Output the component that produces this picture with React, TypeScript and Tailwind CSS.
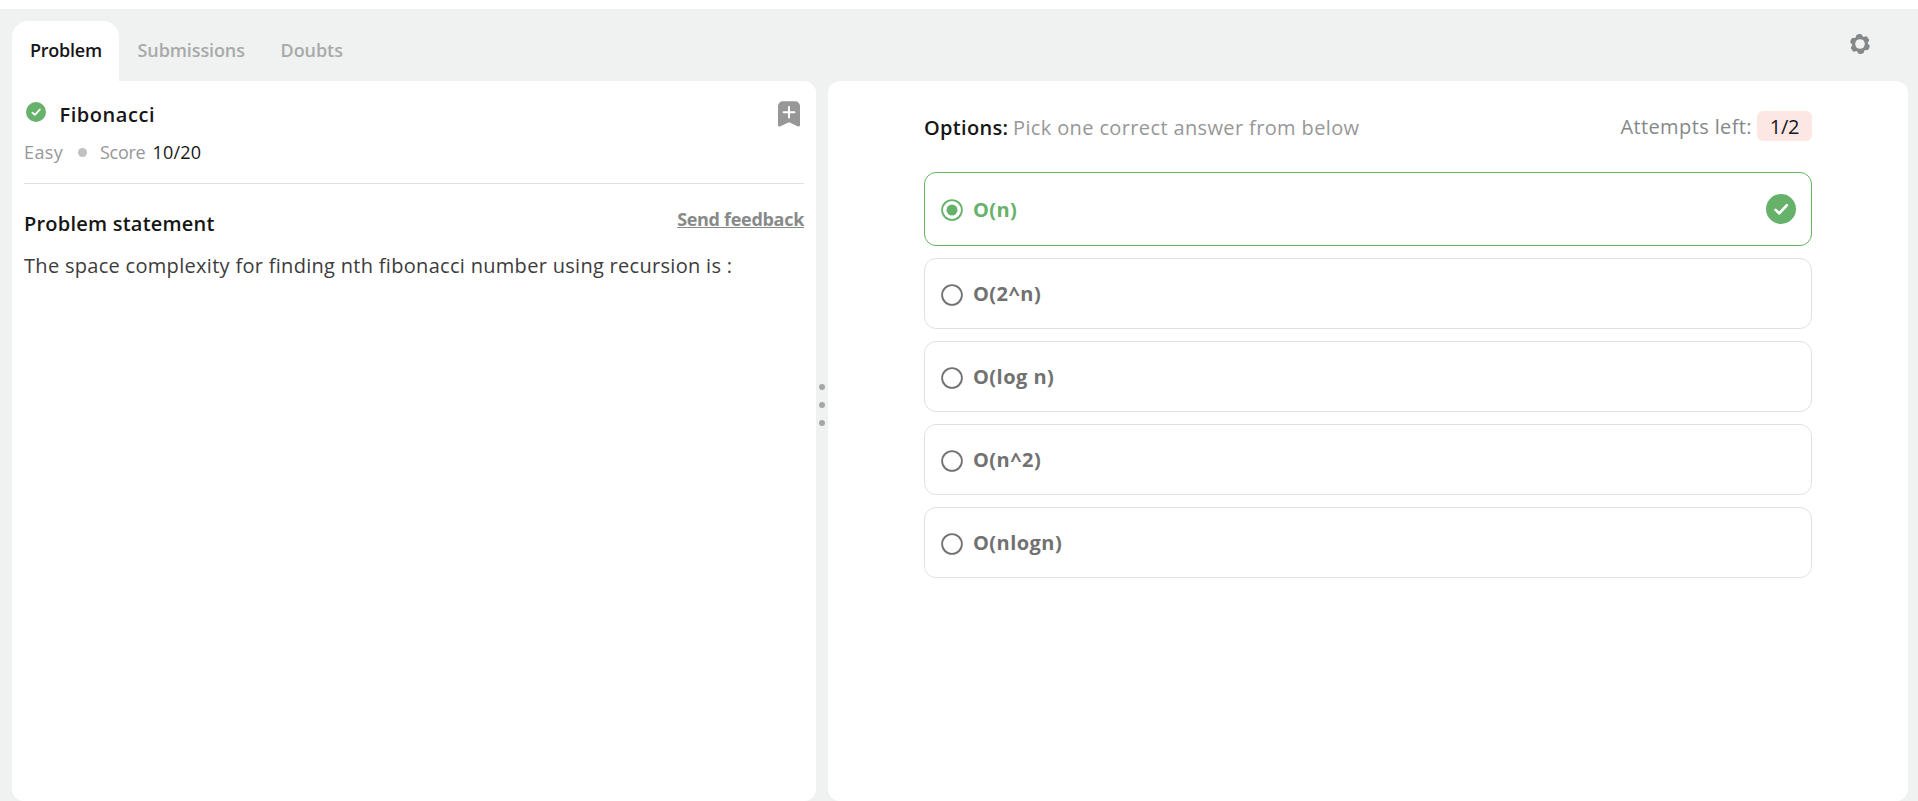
function CheckBadge({ className }: { className: string }) {
  return (
    <svg viewBox="0 0 30 30" className={className}>
      <circle cx="15" cy="15" r="15" fill="#66b26a" />
      <path d="M9.6 15.9l3.6 3.5 7.5-8.1" fill="none" stroke="#fff" strokeWidth="2.7" strokeLinecap="round" strokeLinejoin="round" />
    </svg>
  );
}

function Gear() {
  return (
    <svg viewBox="0 0 20 20" className="size-5">
      <g fill="#858888">
        <circle cx="10" cy="10" r="8" />
        {[-6, 54, 114, 174, 234, 294].map((a) => (
          <rect key={a} x="6.7" y="0" width="6.6" height="6" rx="2.6" transform={`rotate(${a} 10 10)`} />
        ))}
      </g>
      <circle cx="10" cy="10" r="4.8" fill="#f0f2f1" />
    </svg>
  );
}

function Option({ label, selected }: { label: string; selected?: boolean }) {
  return (
    <div
      className={
        selected
          ? "flex h-[74px] items-center rounded-xl border border-[#66b26a] pr-[15px] pl-4 text-[#66b26a]"
          : "flex h-[71px] items-center rounded-xl border border-[#e0e2e1] pr-[15px] pl-4 text-[#717171]"
      }
    >
      <svg viewBox="0 0 22 22" className={selected ? "mt-0.5 size-[22px]" : "mt-[3px] size-[22px]"}>
        <circle cx="11" cy="11" r="9.9" fill="none" stroke="currentColor" strokeWidth="1.8" />
        {selected && <circle cx="11" cy="11" r="5.5" fill="currentColor" />}
      </svg>
      <span
        className={
          selected
            ? "mt-0.5 ml-2.5 flex-1 text-xl/[28px] font-bold tracking-[0.4px]"
            : "ml-2.5 flex-1 text-xl/[28px] font-bold tracking-[0.45px]"
        }
      >
        {label}
      </span>
      {selected && <CheckBadge className="size-[30px]" />}
    </div>
  );
}

export default function App() {
  return (
    <div className="h-[801px] overflow-hidden bg-white pt-[9px] font-['Open_Sans',sans-serif]">
      <div className="flex h-[792px] flex-col bg-[#f0f2f1] pt-3 pr-2.5 pl-3">
        <div className="flex h-[60px] items-start text-lg/6 font-semibold text-[#a8aaa9]">
          <div className="h-full w-[107px] rounded-t-2xl bg-white pt-[17px] pl-[18px] tracking-[-0.24px] text-[#161616]">Problem</div>
          <div className="w-36 pt-[17px] pl-[18.5px] tracking-[-0.1px]">Submissions</div>
          <div className="pt-[17px] pl-[17.5px] tracking-[-0.05px]">Doubts</div>
          <div className="mt-[13px] mr-[38px] ml-auto"><Gear /></div>
        </div>

        <div className="flex h-[720px]">
          <section className="w-[804px] rounded-xl rounded-tl-none bg-white px-3 pt-[19px]">
            <div className="flex h-7 items-start">
              <CheckBadge className="mt-[1.5px] ml-0.5 size-5" />
              <h1 className="mt-px ml-[13.5px] text-xl/7 font-semibold tracking-[0.55px] text-[#161616]">Fibonacci</h1>
              <svg viewBox="0 0 22 26" className="mt-px mr-1 ml-auto h-[26px] w-[22px]">
                <path d="M5 .3h12a5 5 0 0 1 5 5v18.8q0 2-1.9 1.3L11 21.2l-9.100 4.200Q0 26.100 0 24.100V5.300a5 5 0 0 1 5-5z" fill="#979797" />
                <path d="M11 5.900v10.600M5.600 11.200h10.800" stroke="#fff" strokeWidth="2" strokeLinecap="round" />
              </svg>
            </div>
            <div className="mt-3 flex h-6 items-center text-lg/6 text-[#979797]">
              <span className="w-[53.5px] tracking-[0.4px]">Easy</span>
              <span className="size-[9px] rounded-full bg-[#c1c1c1]" />
              <span className="ml-[13.5px] w-[52.5px] tracking-[-0.3px]">Score</span>
              <span className="font-medium tracking-[0.2px] text-[#161616]">10/20</span>
            </div>
            <div className="mt-[19px] h-px bg-[#e0e2e1]" />
            <div className="mt-[25px] flex h-7 items-start justify-between">
              <h2 className="mt-px text-xl/7 font-semibold tracking-[0.22px] text-[#161616]">Problem statement</h2>
              <a className="-mt-0.5 text-lg/6 font-bold tracking-[-0.3px] text-[#888a89] underline decoration-1 underline-offset-1">Send feedback</a>
            </div>
            <p className="mt-[15px] text-xl/7 tracking-[0.3px] whitespace-nowrap text-[#3c3c3c]">
              The space complexity for finding nth fibonacci number using recursion is :
            </p>
          </section>

          <div className="flex w-3 flex-col items-center gap-3 pt-[303px]">
            <span className="size-1.5 rounded-full bg-[#a5a7a6]" />
            <span className="size-1.5 rounded-full bg-[#a5a7a6]" />
            <span className="size-1.5 rounded-full bg-[#a5a7a6]" />
          </div>

          <section className="flex-1 rounded-xl bg-white px-24 pt-[30px]">
            <div className="flex h-[30px] items-start text-xl/[30px]">
              <span className="w-[89px] pt-0.5 font-semibold tracking-[0.31px] text-[#161616]">Options:</span>
              <span className="pt-0.5 tracking-[0.37px] text-[#979797]">Pick one correct answer from below</span>
              <span className="ml-auto pt-px tracking-[0.39px] text-[#858888]">Attempts left:</span>
              <span className="ml-[5px] h-[30px] w-[55px] rounded-md bg-[#fde7e4] pt-px text-center tracking-[-0.3px] text-[#161616]">1/2</span>
            </div>
            <div className="mt-[31px] flex flex-col gap-3">
              <Option label="O(n)" selected />
              <Option label="O(2^n)" />
              <Option label="O(log n)" />
              <Option label="O(n^2)" />
              <Option label="O(nlogn)" />
            </div>
          </section>
        </div>
      </div>
    </div>
  );
}
